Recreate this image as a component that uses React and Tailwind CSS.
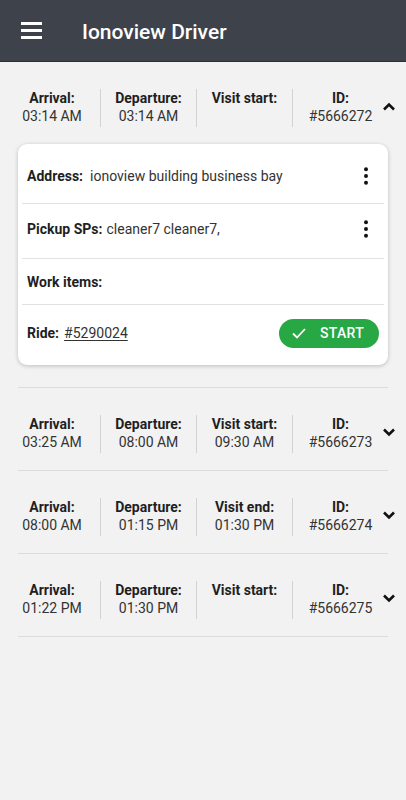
import React from "react";

const visits = [
  { arrival: "03:14 AM", departure: "03:14 AM", visitLabel: "Visit start:", visit: "", id: "#5666272", open: true },
  { arrival: "03:25 AM", departure: "08:00 AM", visitLabel: "Visit start:", visit: "09:30 AM", id: "#5666273" },
  { arrival: "08:00 AM", departure: "01:15 PM", visitLabel: "Visit end:", visit: "01:30 PM", id: "#5666274" },
  { arrival: "01:22 PM", departure: "01:30 PM", visitLabel: "Visit start:", visit: "", id: "#5666275" },
];

const Chevron = ({ up }) => (
  <svg width="14" height="9" viewBox="0 0 14 9" className="shrink-0">
    <path
      d={up ? "M2 7.5 L7 2.5 L12 7.5" : "M2 1.5 L7 6.5 L12 1.5"}
      fill="none"
      stroke="#111"
      strokeWidth="2.6"
    />
  </svg>
);

const Dots = () => (
  <svg width="6" height="18" viewBox="0 0 6 20" className="shrink-0 block">
    <circle cx="3" cy="2.5" r="2.2" fill="#111" />
    <circle cx="3" cy="10" r="2.2" fill="#111" />
    <circle cx="3" cy="17.5" r="2.2" fill="#111" />
  </svg>
);

const Col = ({ label, value, border }) => (
  <div
    className={`w-[96px] h-[38px] flex flex-col items-center leading-[18px] text-[14px] ${
      border ? "border-l border-[#d2d2d2]" : ""
    }`}
  >
    <span className="font-bold text-[#1f1f1f]">{label}</span>
    <span className="text-[#333]">{value}</span>
  </div>
);

const VisitRow = ({ v }) => (
  <div className="flex items-center pl-[4px]">
    <Col label="Arrival:" value={v.arrival} />
    <Col label="Departure:" value={v.departure} border />
    <Col label={v.visitLabel} value={v.visit} border />
    <Col label="ID:" value={v.id} border />
    <div className="-ml-[6px] -mt-[4px]">
      <Chevron up={v.open} />
    </div>
  </div>
);

const DetailCard = () => (
  <div className="mx-[18px] bg-white rounded-[9px] shadow-[0_1px_4px_rgba(0,0,0,0.22)] text-[14px] leading-[18px]">
    <div className="flex items-center justify-between h-[59px] pt-[5px] pl-[9px] pr-[19px]">
      <p>
        <span className="font-bold text-[#1f1f1f]">Address:</span>
        <span className="ml-[7px] text-[#333]">ionoview building business bay</span>
      </p>
      <Dots />
    </div>
    <div className="mx-[4px] h-px bg-[#e2e2e2]" />
    <div className="flex items-center justify-between h-[54px] pb-[4px] pl-[9px] pr-[19px]">
      <p>
        <span className="font-bold text-[#1f1f1f]">Pickup SPs:</span>
        <span className="ml-[4px] text-[#333]">cleaner7 cleaner7,</span>
      </p>
      <Dots />
    </div>
    <div className="mx-[4px] h-px bg-[#e2e2e2]" />
    <div className="flex items-center h-[45px] pl-[9px]">
      <span className="font-bold text-[#1f1f1f]">Work items:</span>
    </div>
    <div className="mx-[4px] h-px bg-[#e2e2e2]" />
    <div className="flex items-center justify-between h-[60px] pb-[4px] pl-[9px] pr-[9px]">
      <p>
        <span className="font-bold text-[#1f1f1f]">Ride:</span>
        <span className="ml-[5px] text-[#333] underline underline-offset-2">#5290024</span>
      </p>
      <button className="w-[100px] h-[29px] rounded-full bg-[#28a745] flex items-center pl-[13px] gap-[14px] text-white">
        <svg width="14" height="11" viewBox="0 0 14 11">
          <path d="M1 5.5 L5 9.5 L13 1" fill="none" stroke="#fff" strokeWidth="1.8" />
        </svg>
        <span className="font-medium text-[14px] tracking-[0.3px]">START</span>
      </button>
    </div>
  </div>
);

export default function App() {
  return (
    <div className="w-[406px] h-[800px] bg-[#f2f2f2] font-['Roboto',sans-serif] overflow-hidden">
      <header className="h-[62px] bg-[#3e424b] border-b border-[#2c303a] flex items-center">
        <div className="ml-[21px] w-[21px] flex flex-col gap-[4px]">
          <span className="h-[3px] bg-white" />
          <span className="h-[3px] bg-white" />
          <span className="h-[3px] bg-white" />
        </div>
        <h1 className="ml-[40px] mt-[4px] text-white text-[21px] font-medium">Ionoview Driver</h1>
      </header>

      {visits.map((v) => (
        <div key={v.id}>
          <div className="pt-[27px] pb-[17px]">
            <VisitRow v={v} />
          </div>
          {v.open && (
            <div className="pb-[22px]">
              <DetailCard />
            </div>
          )}
          <div className="mx-[18px] h-px bg-[#dcdcdc]" />
        </div>
      ))}
    </div>
  );
}
